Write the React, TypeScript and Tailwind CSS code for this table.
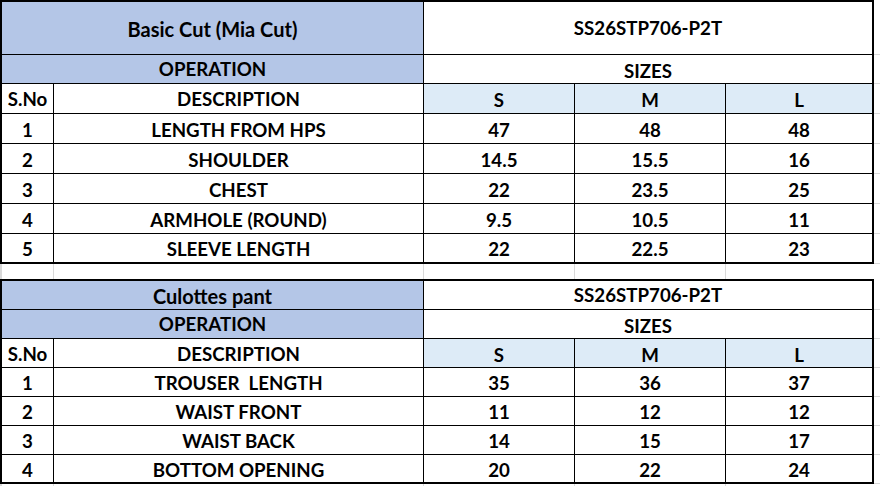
const font = { fontFamily: "Lato, 'Open Sans', sans-serif" };

type Table = {
  title: string;
  style: string;
  rows: [string, string, string, string, string][];
  rowH: string;
  fillH: string[];
};

const tables: Table[] = [
  {
    title: "Basic Cut (Mia Cut)",
    style: "SS26STP706-P2T",
    rows: [
      ["1", "LENGTH FROM HPS", "47", "48", "48"],
      ["2", "SHOULDER", "14.5", "15.5", "16"],
      ["3", "CHEST", "22", "23.5", "25"],
      ["4", "ARMHOLE (ROUND)", "9.5", "10.5", "11"],
      ["5", "SLEEVE LENGTH", "22", "22.5", "23"],
    ],
    rowH: "grid-rows-[53px_29px_30px_30px_30px_30px_30px_28px]",
    fillH: ["h-[55px]", "h-[29px]", "h-[30px]", "h-[30px]", "h-[30px]", "h-[30px]", "h-[30px]", "h-[30px]"],
  },
  {
    title: "Culottes pant",
    style: "SS26STP706-P2T",
    rows: [
      ["1", "TROUSER  LENGTH", "35", "36", "37"],
      ["2", "WAIST FRONT", "11", "12", "12"],
      ["3", "WAIST BACK", "14", "15", "17"],
      ["4", "BOTTOM OPENING", "20", "22", "24"],
    ],
    rowH: "grid-rows-[29px_29px_29px_29px_29px_29px_27px]",
    fillH: ["h-[31px]", "h-[29px]", "h-[29px]", "h-[29px]", "h-[29px]", "h-[29px]", "h-[29px]"],
  },
];

const cell = "flex items-center justify-center border-black whitespace-pre leading-none";

function SizeTable({ t }: { t: Table }) {
  const last = t.rows.length - 1;
  return (
    <div className="flex">
      <div className={`grid grid-cols-[52px_370px_151px_151px_146px] ${t.rowH} border-2 border-black`}>
        <div className={`${cell} col-span-2 border-r border-b bg-[#b4c6e7] pt-[1px] text-[20px]`}>{t.title}</div>
        <div className={`${cell} col-span-3 border-b bg-white pt-[1px]`}>{t.style}</div>
        <div className={`${cell} col-span-2 border-r border-b bg-[#b4c6e7] pt-[1px]`}>OPERATION</div>
        <div className={`${cell} col-span-3 border-b bg-white pt-[5px]`}>SIZES</div>
        <div className={`${cell} border-r border-b pt-[2px]`}>S.No</div>
        <div className={`${cell} border-r border-b pt-[2px]`}>DESCRIPTION</div>
        <div className={`${cell} border-r border-b bg-[#ddebf7] pt-[4px]`}>S</div>
        <div className={`${cell} border-r border-b bg-[#ddebf7] pt-[4px]`}>M</div>
        <div className={`${cell} border-b bg-[#ddebf7] pt-[4px]`}>L</div>
        {t.rows.map((r, i) =>
          r.map((v, j) => (
            <div
              key={`${i}-${j}`}
              className={`${cell} pt-[3px] ${j < 4 ? "border-r" : ""} ${i < last ? "border-b" : ""}`}
            >
              {v}
            </div>
          ))
        )}
      </div>
      <div className="flex w-[6px] flex-col">
        {t.fillH.map((h, i) => (
          <div key={i} className={`${h} border-b border-[#d9d9d9]`} />
        ))}
      </div>
    </div>
  );
}

export default function App() {
  return (
    <div className="h-[486px] w-[880px] overflow-hidden bg-white text-[18.7px] font-bold text-black" style={font}>
      <SizeTable t={tables[0]} />
      <div className="grid h-[15px] grid-cols-[54px_370px_151px_151px_146px]">
        <div className="border-l-2 border-r border-[#d9d9d9]" />
        <div className="border-r border-[#d9d9d9]" />
        <div className="border-r border-[#d9d9d9]" />
        <div className="border-r border-[#d9d9d9]" />
        <div />
      </div>
      <SizeTable t={tables[1]} />
      <div className="grid h-[3px] grid-cols-[54px_370px_151px_151px_146px]">
        <div className="border-l-2 border-r border-[#d9d9d9]" />
        <div className="border-r border-[#d9d9d9]" />
        <div className="border-r border-[#d9d9d9]" />
        <div className="border-r border-[#d9d9d9]" />
        <div />
      </div>
    </div>
  );
}
